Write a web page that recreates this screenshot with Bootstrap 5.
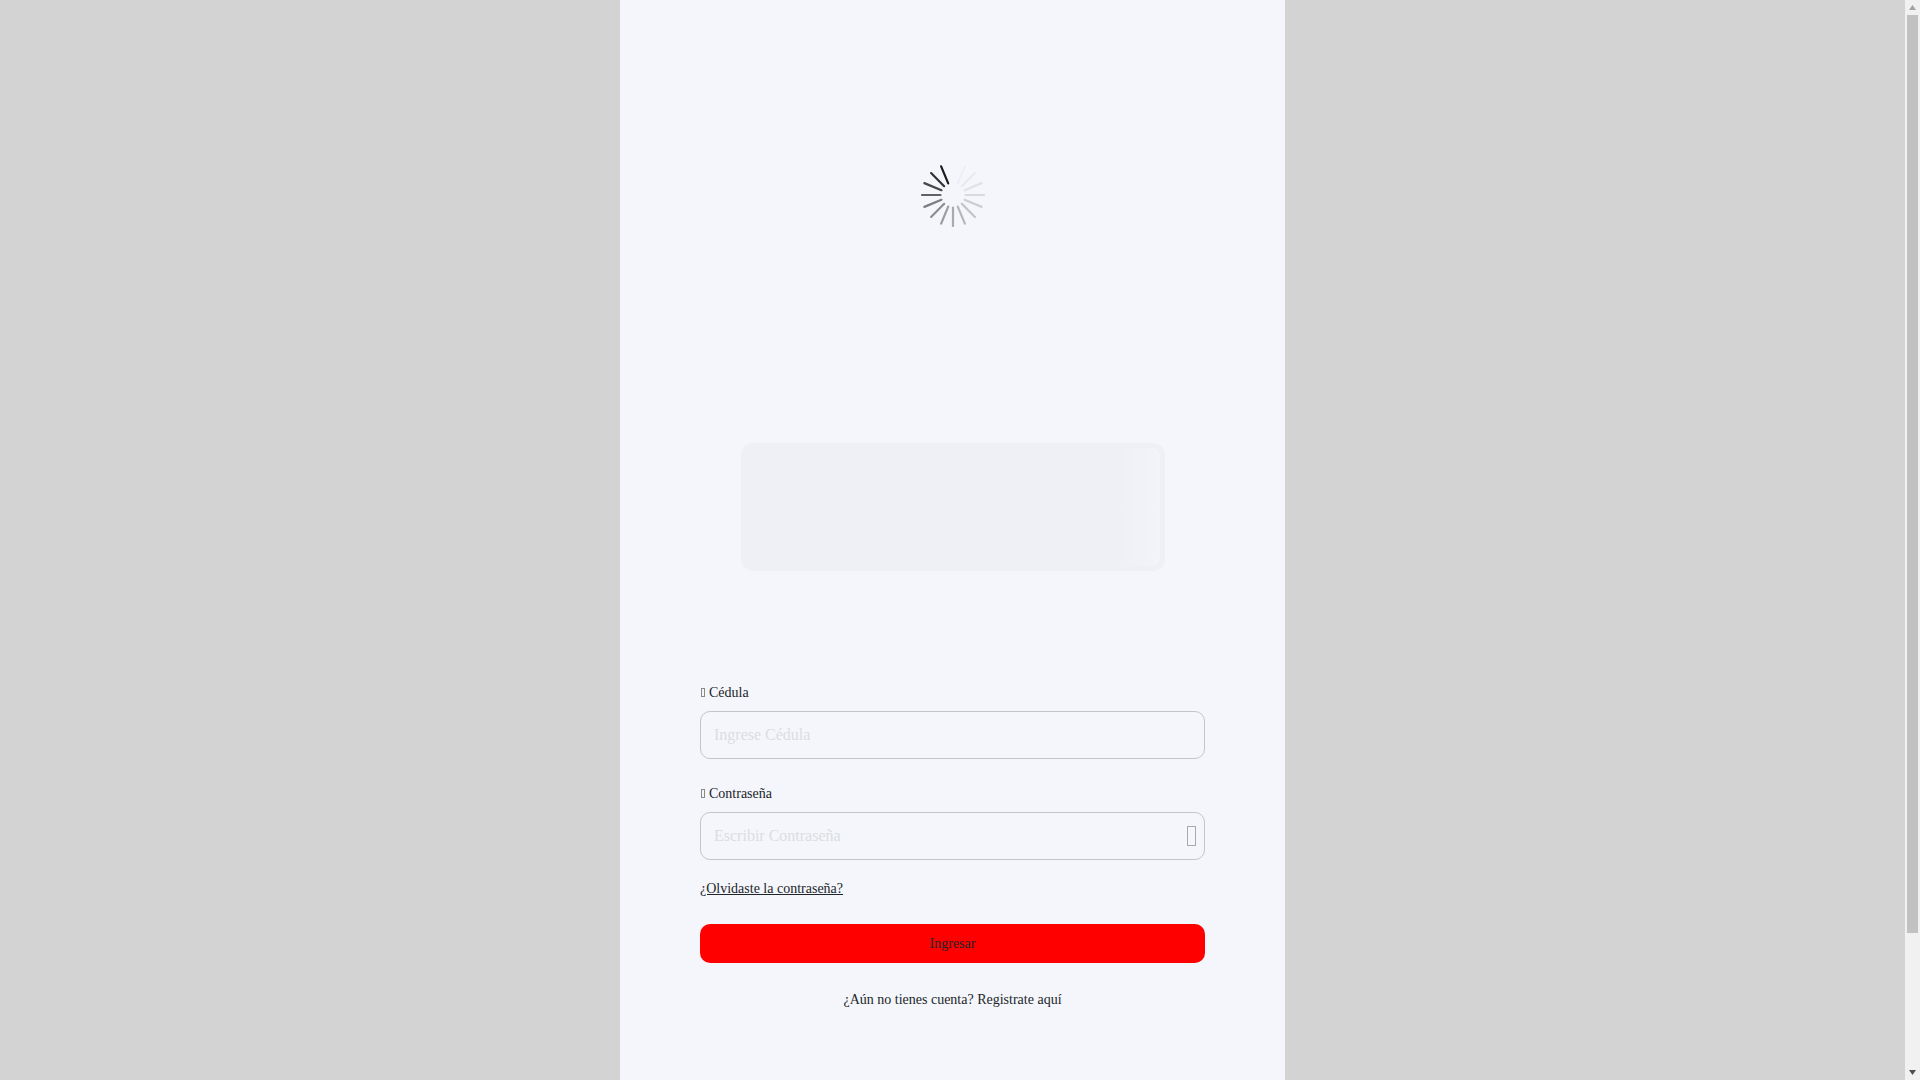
<!DOCTYPE html>
<html lang="es">
<head>
<meta charset="utf-8">
<title>Ingresar</title>
<link href="https://cdn.jsdelivr.net/npm/bootstrap@5.3.0/dist/css/bootstrap.min.css" rel="stylesheet">
<style>
body{background:#d3d3d3;font-family:"Liberation Serif",serif;font-size:14px;color:#212529;padding-right:15px}
.login-panel{width:665px;min-height:1235px;margin:0 auto;background:#f4f6fb;padding:163px 80px 0}
.spin-wrap{height:64px}
.logo-slot{width:424px;height:128px;margin:216px auto 0;background:#eff0f5;border-radius:12px;padding:5px}
.logo-shine{width:40px;height:118px;margin-left:auto;border-radius:0 9px 9px 0;background:linear-gradient(90deg,#eff0f5,#f3f4f9)}
.login-form{margin-top:111px}
.field-label{display:block;font-size:14px;line-height:21px;margin:0 0 8px}
.tofu::before{content:"";display:inline-block;width:4px;height:9px;margin:0 4px 0 1px;border:1px solid #8a8a8a}
.field-input{height:48px;padding:6px 13px;font-family:inherit;font-size:16px;background:transparent;border:1px solid #c4c5c9;border-radius:10px;color:#212529}
.field-input::placeholder{color:#dcdde0;opacity:1}
.field-input:focus{background:transparent}
.field-gap{margin-bottom:24px}
.eye-btn{position:absolute;top:50%;right:9px;transform:translateY(-50%);display:block;width:9px;height:20px;background:none;border:1.5px solid #a9aaad;padding:0}
.forgot{display:inline-block;margin-top:18px;font-size:14px;line-height:21px;color:#212529}
.enter-btn{display:block;width:100%;height:39px;margin-top:25px;background:#f00;border:0;border-radius:10px;font-size:14px;color:#212529}
.enter-btn:hover{background:#f00;color:#212529}
.signup{margin-top:26px;line-height:21px;text-align:center}
.signup a{color:#212529;text-decoration:none}
.fake-scroll{position:fixed;top:0;right:0;bottom:0;width:15px;background:#f1f1f1}
.scroll-arrow{height:15px;padding:5px 4px}
.scroll-arrow svg{display:block}
.scroll-thumb{height:918px;margin:0 2px;background:#c1c1c1}
</style>
</head>
<body>
<main class="login-panel">
  <div class="spin-wrap d-flex justify-content-center">
    <svg width="64" height="64" viewBox="-32 -32 64 64" fill="none" stroke="#1c1c1c" stroke-width="2.2" stroke-linecap="round" aria-hidden="true">
      <g>
        <line y1="-12.5" y2="-31" transform="rotate(22.5)" stroke-opacity=".03"/>
        <line y1="-12.5" y2="-31" transform="rotate(45)" stroke-opacity=".06"/>
        <line y1="-12.5" y2="-31" transform="rotate(67.5)" stroke-opacity=".09"/>
        <line y1="-12.5" y2="-31" transform="rotate(90)" stroke-opacity=".13"/>
        <line y1="-12.5" y2="-31" transform="rotate(112.5)" stroke-opacity=".18"/>
        <line y1="-12.5" y2="-31" transform="rotate(135)" stroke-opacity=".23"/>
        <line y1="-12.5" y2="-31" transform="rotate(157.5)" stroke-opacity=".29"/>
        <line y1="-12.5" y2="-31" transform="rotate(180)" stroke-opacity=".35"/>
        <line y1="-12.5" y2="-31" transform="rotate(202.5)" stroke-opacity=".41"/>
        <line y1="-12.5" y2="-31" transform="rotate(225)" stroke-opacity=".48"/>
        <line y1="-12.5" y2="-31" transform="rotate(247.5)" stroke-opacity=".55"/>
        <line y1="-12.5" y2="-31" transform="rotate(270)" stroke-opacity=".68"/>
        <line y1="-12.5" y2="-31" transform="rotate(292.5)" stroke-opacity=".8"/>
        <line y1="-12.5" y2="-31" transform="rotate(315)" stroke-opacity=".9"/>
        <line y1="-12.5" y2="-31" transform="rotate(337.5)" stroke-opacity="1"/>
      </g>
    </svg>
  </div>
  <div class="logo-slot"><div class="logo-shine"></div></div>
  <form class="login-form">
    <div class="field-gap">
      <label class="field-label tofu" for="ced">Cédula</label>
      <input id="ced" class="form-control field-input" type="text" placeholder="Ingrese Cédula">
    </div>
    <div>
      <label class="field-label tofu" for="pwd">Contraseña</label>
      <div class="position-relative">
        <input id="pwd" class="form-control field-input" type="password" placeholder="Escribir Contraseña">
        <button class="eye-btn" type="button" aria-label="Mostrar contraseña"></button>
      </div>
    </div>
    <a class="forgot" href="#">¿Olvidaste la contraseña?</a>
    <button class="btn enter-btn" type="submit">Ingresar</button>
    <p class="signup"><a href="#">¿Aún no tienes cuenta? Registrate aquí</a></p>
  </form>
</main>
<div class="fake-scroll d-flex flex-column" aria-hidden="true">
  <div class="scroll-arrow"><svg width="7" height="5" viewBox="0 0 7 5"><polygon points="3.5,0 7,5 0,5" fill="#a3a3a3"/></svg></div>
  <div class="scroll-thumb"></div>
  <div class="scroll-arrow mt-auto"><svg width="7" height="5" viewBox="0 0 7 5"><polygon points="0,0 7,0 3.5,5" fill="#505050"/></svg></div>
</div>
<script src="https://cdn.jsdelivr.net/npm/bootstrap@5.3.0/dist/js/bootstrap.bundle.min.js"></script>
</body>
</html>
